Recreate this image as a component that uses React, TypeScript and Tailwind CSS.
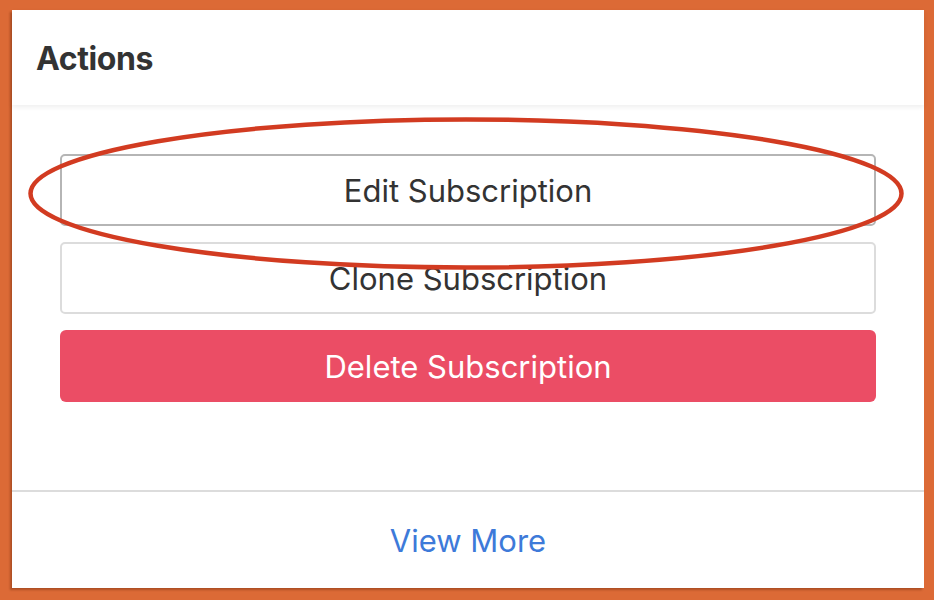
const font = { fontFamily: 'Inter, "Liberation Sans", sans-serif' }

const App = () => {
  return (
    <div className="w-[934px] h-[600px] bg-[#DC6A36] pl-[12px] pt-[10px] pr-[10px] pb-[12px]" style={font}>
      <div className="relative w-full h-full bg-white flex flex-col shadow-[-2px_2px_2px_rgba(90,30,0,0.35)]">
        {/* Header */}
        <div className="relative z-10 h-[95px] px-[24px] pt-[2px] flex items-center shadow-[0_2px_5px_rgba(0,0,0,0.07)]">
          <h2 className="text-[32px] font-bold text-[#333333] tracking-[-0.4px]">Actions</h2>
        </div>

        {/* Buttons */}
        <div className="flex-1 px-[48px] pt-[49px] flex flex-col gap-4">
          <button className="h-[72px] w-full pt-[2px] rounded-[5px] border-2 border-[#b5b5b5] bg-white text-[31px] text-[#333333]">
            Edit Subscription
          </button>
          <button className="h-[72px] w-full pt-[2px] rounded-[5px] border-2 border-[#dcdcdc] bg-white text-[31px] text-[#333333]">
            Clone Subscription
          </button>
          <button className="h-[72px] w-full pt-[2px] rounded-[6px] bg-[#EB4D65] text-[31px] text-white">
            Delete Subscription
          </button>
        </div>

        {/* Footer */}
        <div className="h-[98px] border-t-2 border-[#dcdcdc] flex items-center justify-center">
          <a className="text-[31px] text-[#3D7AD9] pt-[2px]">View More</a>
        </div>

        {/* Annotation ellipse */}
        <svg className="absolute left-0 top-0 pointer-events-none" width="912" height="578" viewBox="0 0 912 578">
          <ellipse cx="454" cy="183.5" rx="435.5" ry="74" fill="none" stroke="#D23B21" strokeWidth="4.5" />
        </svg>
      </div>
    </div>
  )
}

export default App
